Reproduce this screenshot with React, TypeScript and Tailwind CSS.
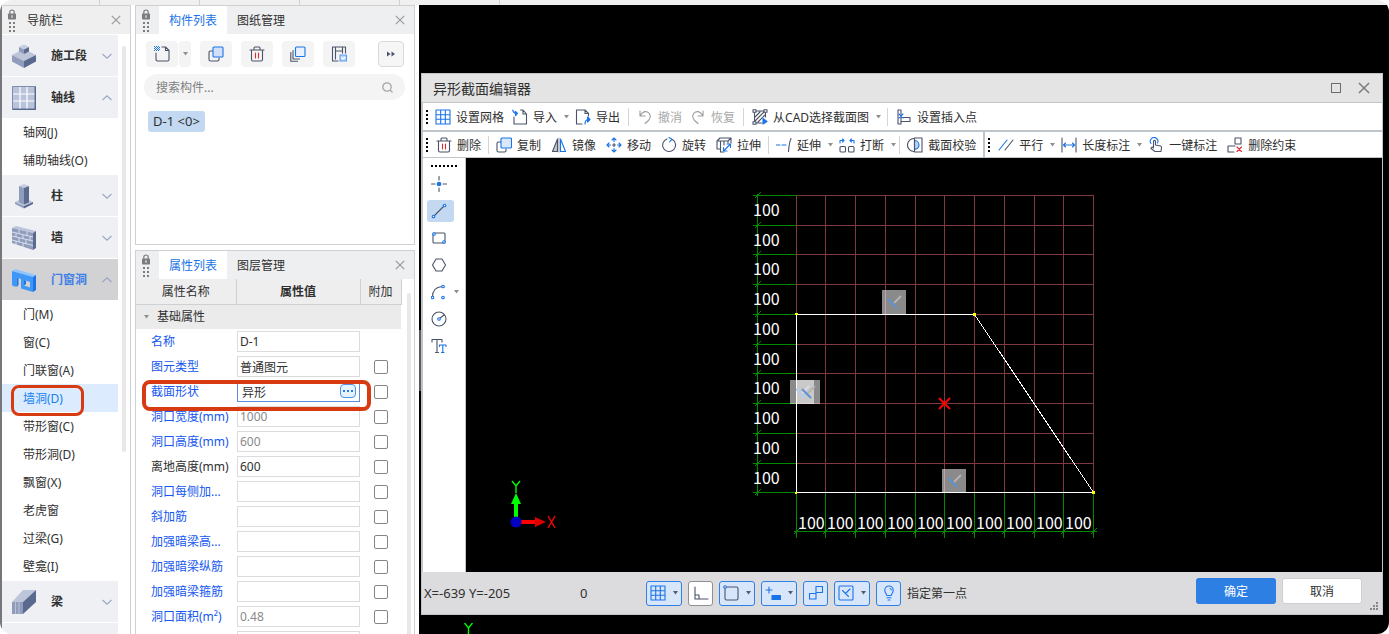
import type { ReactNode } from 'react';

interface NavGroup {
  label: string;
  icon: ReactNode;
  open?: boolean;
  active?: boolean;
  children?: string[];
}

interface PropertyRow {
  name: string;
  value: string;
  required?: boolean;
  readOnly?: boolean;
  editing?: boolean;
  noExtra?: boolean;
}

const INK = '#4b5369';
const BLUE = '#1a73e8';

/* ---------- small shared drawings ---------- */

const Icon = ({ children, size = 16 }: { children: ReactNode; size?: number }) => (
  <svg
    width={size}
    height={size}
    viewBox="0 0 16 16"
    fill="none"
    stroke={INK}
    strokeWidth="1.1"
    strokeLinecap="round"
    strokeLinejoin="round"
    className="shrink-0"
    aria-hidden="true"
  >
    {children}
  </svg>
);

const Caret = ({ color = '#8f8f8f' }: { color?: string }) => (
  <svg width="5" height="4" viewBox="0 0 5 4" className="shrink-0" aria-hidden="true">
    <path d="M0 0h5L2.5 3.5z" fill={color} />
  </svg>
);

const CloseIcon = ({ size = 10, color = '#9a9a9a' }: { size?: number; color?: string }) => (
  <svg width={size} height={size} viewBox="0 0 10 10" stroke={color} strokeWidth="1.2" aria-hidden="true">
    <path d="M.8.8l8.4 8.4M9.2.8L.8 9.2" />
  </svg>
);

const LockGrip = () => (
  <svg width="10" height="23" viewBox="0 0 10 23" fill="#7d7d80" aria-hidden="true">
    <path d="M2.8 5V3.2a2.2 2.2 0 014.4 0V5" fill="none" stroke="#7d7d80" strokeWidth="1.2" />
    <rect x="1" y="4.5" width="8" height="6" rx=".8" />
    <path d="M4.5 6.2h1v2.5h-1z" fill="#fff" />
    {[13, 17, 21].map((y) => (
      <g key={y}>
        <rect x="2" y={y} width="2" height="2" />
        <rect x="6" y={y} width="2" height="2" />
      </g>
    ))}
  </svg>
);

const Chevron = ({ up }: { up?: boolean }) => (
  <svg width="10" height="6" viewBox="0 0 10 6" fill="none" stroke="#9aa6c4" strokeWidth="1.1" aria-hidden="true">
    <path d={up ? 'M.5 5L5 .8 9.5 5' : 'M.5 1L5 5.2 9.5 1'} />
  </svg>
);

/* ---------- navigation icons ---------- */

const SegmentIcon = () => (
  <svg width="26" height="26" viewBox="0 0 26 26" aria-hidden="true">
    <path d="M1 12l12-6 12 6-12 6z" fill="#bcc5d9" />
    <path d="M1 12l12 6v7L1 18.500z" fill="#8f9cbc" />
    <path d="M25 12l-12 6v7l12-6.500z" fill="#5a6a8f" />
    <path d="M8 4l5-2.500L18 4l-5 2.500z" fill="#c5cde0" />
    <path d="M8 4l5 2.500V11L8 8.500z" fill="#8f9cbc" />
    <path d="M18 4l-5 2.500V11l5-2.500z" fill="#5a6a8f" />
  </svg>
);

const AxisIcon = () => (
  <svg width="26" height="26" viewBox="0 0 26 26" aria-hidden="true">
    <rect x="1" y="1" width="24" height="24" fill="#5a6a8f" />
    <rect x="1" y="1" width="22.500" height="22.500" fill="#b9c3d9" />
    <path d="M1.500 25V1.500H25" fill="none" stroke="#7e8cae" />
    <path d="M9 2v21.500M16 2v21.500M2 9h21.500M2 16h21.500" stroke="#fff" strokeWidth="1.200" />
  </svg>
);

const ColumnIcon = () => (
  <svg width="26" height="26" viewBox="0 0 26 26" aria-hidden="true">
    <path d="M4 19l9-4.500 9 4.500-9 4z" fill="#bcc5d9" />
    <path d="M4 19l9 4v2.500L4 21z" fill="#8f9cbc" />
    <path d="M22 19l-9 4v2.500l9-4.500z" fill="#5a6a8f" />
    <path d="M8 3l5-2 5 2-5 2z" fill="#c5cde0" />
    <path d="M8 3l5 2v16.500L8 19.500z" fill="#8f9cbc" />
    <path d="M18 3l-5 2v16.500l5-2z" fill="#5a6a8f" />
  </svg>
);

const WallIcon = () => (
  <svg width="26" height="26" viewBox="0 0 26 26" aria-hidden="true">
    <path d="M1 3l4-2 20 5-3 2z" fill="#bcc5d9" />
    <path d="M1 3l21 5v17L1 18z" fill="#8f9cbc" />
    <path d="M22 8l3-2v17l-3 2z" fill="#5a6a8f" />
    <path
      d="M1 7l21 5M1 11l21 5M1 15l21 5.500M8 4.500v4M16 6.500v4M5 8v4M12 10v4M19 11.500v4M8 13v4M15 14.500v4.500M5 16v4M12 18v4"
      stroke="#e2e7f2"
      strokeWidth=".9"
    />
  </svg>
);

const OpeningIcon = () => (
  <svg width="26" height="26" viewBox="0 0 26 26" aria-hidden="true">
    <path d="M1 4l3-2 21 6-3 2z" fill="#8ec5ff" />
    <path fillRule="evenodd" d="M1 4l21 6v15L10 21.500V12L5.500 10.500V20L1 18.500zM13 13v5.500l6 2V15z" fill="#3f97f7" />
    <path d="M22 10l3-2v15l-3 2z" fill="#1c74e6" />
    <path d="M5.500 10.500l2 .7V18l-2 2zM13 18.500l2-1.500V13.700l-2-.7z" fill="#1c74e6" />
  </svg>
);

const BeamIcon = () => (
  <svg width="26" height="26" viewBox="0 0 26 26" aria-hidden="true">
    <path d="M1 13L12 1h13L12 13z" fill="#bcc5d9" />
    <path d="M12 13L25 1v12L12 25z" fill="#5a6a8f" />
    <path d="M1 13h11v12H1z" fill="#8f9cbc" />
    <path d="M4.500 13v12M8 13v12" stroke="#c5cde0" strokeWidth=".8" />
  </svg>
);

const navGroups: NavGroup[] = [
  { label: '施工段', icon: <SegmentIcon /> },
  { label: '轴线', icon: <AxisIcon />, open: true, children: ['轴网(J)', '辅助轴线(O)'] },
  { label: '柱', icon: <ColumnIcon /> },
  { label: '墙', icon: <WallIcon /> },
  {
    label: '门窗洞',
    icon: <OpeningIcon />,
    open: true,
    active: true,
    children: [
      '门(M)', '窗(C)', '门联窗(A)', '墙洞(D)', '带形窗(C)',
      '带形洞(D)', '飘窗(X)', '老虎窗', '过梁(G)', '壁龛(I)',
    ],
  },
  { label: '梁', icon: <BeamIcon /> },
];

const properties: PropertyRow[] = [
  { name: '名称', value: 'D-1', noExtra: true },
  { name: '图元类型', value: '普通图元' },
  { name: '截面形状', value: '异形', editing: true },
  { name: '洞口宽度(mm)', value: '1000', readOnly: true },
  { name: '洞口高度(mm)', value: '600', readOnly: true },
  { name: '离地高度(mm)', value: '600', required: true },
  { name: '洞口每侧加...', value: '' },
  { name: '斜加筋', value: '' },
  { name: '加强暗梁高...', value: '' },
  { name: '加强暗梁纵筋', value: '' },
  { name: '加强暗梁箍筋', value: '' },
  { name: '洞口面积(m²)', value: '0.48', readOnly: true },
  { name: '', value: '' },
];

/* ---------- left navigation ---------- */

const NavPanel = () => (
  <nav className="w-[131px] shrink-0 border-l-2 border-r border-l-[#77777b] border-r-[#d0d0d2] bg-white overflow-hidden">
    <header className="h-[29px] flex items-center bg-[#efeff0] border-t border-[#d0d0d2] pl-[5px] pr-[9px]">
      <LockGrip />
      <span className="ml-2.5 pt-0.5 flex-1">导航栏</span>
      <button aria-label="关闭导航栏"><CloseIcon /></button>
    </header>
    <div className="relative">
      <div className="w-[116px]">
        {navGroups.map((g) => (
          <section key={g.label}>
            <button
              className={`w-full h-[42px] flex items-center border-t border-white pl-[9px] pr-1.5 font-bold ${
                g.active ? 'bg-[#d2d2d4] text-[#3f7fe8]' : 'bg-[#eff0f4]'
              }`}
            >
              {g.icon}
              <span className="ml-3.5 flex-1 text-left">{g.label}</span>
              <Chevron up={g.open} />
            </button>
            {g.children?.map((c) => (
              <a
                key={c}
                href="#"
                className={`relative flex items-center h-7 pt-0.5 pl-[21px] ${c === '墙洞(D)' ? 'bg-[#dcebfe] text-[#1482f0]' : ''}`}
              >
                {c}
                {c === '墙洞(D)' && (
                  <span className="absolute left-[9px] top-px w-[73px] h-[31px] border-[3px] border-[#d83a12] rounded-lg" />
                )}
              </a>
            ))}
          </section>
        ))}
        <div className="h-[42px] border-t border-white bg-[#eff0f4]" />
      </div>
      <div className="absolute right-1 top-3 w-1 h-[406px] rounded-full bg-[#e8e8e9]" />
    </div>
  </nav>
);

/* ---------- component list + property list ---------- */

const PanelTabs = ({ tabs }: { tabs: [string, string] }) => (
  <header className="h-7 flex items-stretch bg-[#eeeff1] pr-[9px]">
    <span className="w-[23px] flex items-center justify-center pr-1"><LockGrip /></span>
    <button className="px-2.5 pt-px bg-white text-[#1a73e8]">{tabs[0]}</button>
    <button className="px-2.5 pt-px">{tabs[1]}</button>
    <span className="flex-1" />
    <button aria-label="关闭面板"><CloseIcon /></button>
  </header>
);

const tile = 'w-8 h-[26px] flex items-center justify-center rounded-sm bg-[#f4f4f5]';

const ComponentList = () => (
  <section className="h-60 shrink-0 border border-[#d0d0d2] bg-white">
    <PanelTabs tabs={['构件列表', '图纸管理']} />
    <div className="flex mt-[7px] ml-2.5 mr-2.5">
      <button className={tile} aria-label="新建">
        <Icon>
          <path d="M2 7v6.500c0 1 .5 1.500 1.500 1.500h10c1 0 1.500-.5 1.500-1.500V4.500L11.500 1H8M11.500 1v3.500H15" />
          <path
            d="M0 .5h5M1 1.500h5M0 2.500h5M1 3.500h5M0 4.500h5"
            stroke={BLUE}
            strokeDasharray="1 1"
            strokeLinecap="butt"
          />
        </Icon>
      </button>
      <button className="w-3 ml-px h-[26px] flex items-center justify-center rounded-sm bg-[#f4f4f5]" aria-label="新建选项">
        <Caret />
      </button>
      <div className="flex gap-[9px] ml-[9px]">
        <button className={tile} aria-label="复制构件">
          <Icon>
            <path d="M4.500 5H2.500C1.500 5 1 5.500 1 6.500v7c0 1 .5 1.500 1.500 1.500h7c1 0 1.500-.5 1.500-1.500V12" />
            <rect x="5" y="1" width="10" height="10" rx="1" fill="#cfe0f8" stroke={BLUE} />
          </Icon>
        </button>
        <button className={tile} aria-label="删除构件"><TrashIcon /></button>
        <button className={tile} aria-label="层间复制">
          <Icon>
            <path d="M3 4.500v8.500h6.500M.8 6.500v8.700H7.500" />
            <rect x="5.500" y="1" width="9.500" height="9.500" rx="1" fill="#e8f1fd" stroke={BLUE} />
          </Icon>
        </button>
        <button className={tile} aria-label="存档">
          <Icon>
            <path d="M7 15H1.500V1h13v6M4.500 1v12M4.500 5h7V1M11.500 5v2" />
            <rect x="9" y="9" width="6.500" height="6" fill="#bcd6fb" stroke="#5b9cf5" />
            <path d="M10.500 11.500l1.500 1.500 2-1.500" stroke="#fff" />
          </Icon>
        </button>
      </div>
      <button
        className="ml-auto w-[26px] h-[26px] flex items-center justify-center rounded-sm border border-[#dadada] bg-[#f6f6f7]"
        aria-label="更多"
      >
        <svg width="8" height="6" viewBox="0 0 8 6" fill={INK} aria-hidden="true"><path d="M0 .5L3.500 3 0 5.500zM4.500.5L8 3 4.500 5.500z" /></svg>
      </button>
    </div>
    <label className="mt-[7px] ml-2 mr-[9px] h-[26px] rounded-full bg-[#f4f4f4] flex items-center px-3">
      <input
        aria-label="搜索构件"
        placeholder="搜索构件..."
        className="flex-1 min-w-0 pt-0.5 bg-transparent outline-none placeholder:text-[#808080]"
      />
      <svg width="11" height="11" viewBox="0 0 11 11" fill="none" stroke="#a6a6a6" strokeWidth="1.3" aria-hidden="true">
        <circle cx="5" cy="5" r="4.200" />
        <path d="M8 8l2.500 2.500" />
      </svg>
    </label>
    <button className="ml-3 mt-[11px] w-[57px] h-[21px] rounded-[3px] bg-[#c2d9f1] text-[13px]">D-1 &lt;0&gt;</button>
  </section>
);

const PropertyPanel = () => (
  <section className="relative flex-1 min-h-0 mt-[5px] border border-b-0 border-[#d0d0d2] bg-white">
    <PanelTabs tabs={['属性列表', '图层管理']} />
    <div className="overflow-hidden h-[calc(100%-28px)] relative">
      <table className="table-fixed w-[265px] border-collapse">
        <colgroup>
          <col className="w-[100px]" />
          <col className="w-[124px]" />
          <col className="w-[41px]" />
        </colgroup>
        <thead>
          <tr className="h-[25px] bg-[#eeeeef]">
            <th className="pt-px font-normal border-r border-b border-[#d0d0d2]">属性名称</th>
            <th className="pt-px font-bold border-r border-b border-[#d0d0d2]">属性值</th>
            <th className="pt-px font-normal border-r border-b border-[#d0d0d2]">附加</th>
          </tr>
        </thead>
        <tbody>
          <tr className="h-[25px] bg-[#ebebec]">
            <td colSpan={3} className="pl-2">
              <span className="flex items-center gap-2"><Caret />基础属性</span>
            </td>
          </tr>
          {properties.map((p, i) => (
            <tr key={i} className="h-[25px]">
              <td className={`pl-[15px] whitespace-nowrap ${p.required ? '' : 'text-[#1557f0]'}`}>
                <label htmlFor={`prop-${i}`}>{p.name}</label>
              </td>
              <td className="pl-px">
                <span className="relative block">
                  <input
                    id={`prop-${i}`}
                    defaultValue={p.value}
                    readOnly={p.readOnly}
                    className={`block w-[123px] h-[21px] border outline-none ${
                      p.editing ? 'border-[#5c8edb] px-1' : 'border-[#dcdcdc] px-0.5'
                    } ${p.readOnly ? 'text-[#8a8a8a]' : ''}`}
                  />
                  {p.editing && (
                    <button
                      aria-label="编辑截面"
                      className="absolute right-1 top-[3px] w-4 h-3.5 rounded-sm border border-[#4a94e6] bg-[#e6f2fe] flex items-center justify-center gap-0.5"
                    >
                      <i className="w-0.5 h-0.5 bg-[#2d7be0]" />
                      <i className="w-0.5 h-0.5 bg-[#2d7be0]" />
                      <i className="w-0.5 h-0.5 bg-[#2d7be0]" />
                    </button>
                  )}
                </span>
              </td>
              <td>
                {!p.noExtra && (
                  <input
                    type="checkbox"
                    aria-label={`附加 ${p.name}`}
                    className="block mx-auto appearance-none w-3.5 h-3.5 rounded-[2px] border border-[#858585] bg-white"
                  />
                )}
              </td>
            </tr>
          ))}
        </tbody>
      </table>
      <div className="absolute right-[3px] top-3.5 bottom-0 w-1 rounded-t-full bg-[#e8e8e9]" />
    </div>
    {/* highlight round the section shape row */}
    <div className="absolute left-1.5 top-[129px] w-[229px] h-[31px] border-4 border-[#d83a12] rounded-lg pointer-events-none" />
  </section>
);

/* ---------- section editor ---------- */

const TrashIcon = () => (
  <Icon>
    <path d="M1 4h14M5 4V2c0-.6.400-1 1-1h4c.6 0 1 .4 1 1v2M2.500 4v9.500c0 1 .5 1.500 1.500 1.500h8c1 0 1.500-.5 1.500-1.500V4" />
    <path d="M6.500 7v5M9.500 7v5" stroke="#dd2a35" />
  </Icon>
);

const GridIcon = () => (
  <Icon>
    <path d="M1 1h14v14H1zM5.700 1v14M10.300 1v14M1 5.700h14M1 10.300h14" stroke={BLUE} />
  </Icon>
);

const ImportIcon = () => (
  <Icon>
    <path d="M2 8v7h12.500V5L11 1H8.500M11 1v4h3.500" />
    <path d="M.8 1c.2 2.500 1.500 3.500 4 3.500M3.500 2.500l2 2-2 2.200z" stroke={BLUE} fill={BLUE} fillOpacity=".7" />
  </Icon>
);

const ExportIcon = () => (
  <Icon>
    <path d="M7 15H1.500V1H10l3.500 3.500V7M10 1v3.500h3.500" />
    <path d="M10 15c0-3 1-4.500 4-4.500" stroke={BLUE} />
    <path d="M12.500 8l2.500 2.500-2.500 2.500z" stroke={BLUE} fill={BLUE} />
  </Icon>
);

const UndoIcon = () => (
  <Icon>
    <path d="M3 2v5h5M3 7c2-3.500 5-5 7.500-4 3.500 1.500 3.500 6 1 8.500L8 14.500" stroke="#9b9b9b" />
  </Icon>
);

const RedoIcon = () => (
  <Icon>
    <path d="M13 2v5H8M13 7c-2-3.500-5-5-7.500-4C2 4.500 2 9 4.500 11.500L8 14.500" stroke="#9b9b9b" />
  </Icon>
);

const CadIcon = () => (
  <Icon>
    <path d="M3 2h10M2.500 3v10M13.500 3v5M3 14h7M3 8l5-5M3 12l9-9M6 13l7-7" />
    <path d="M1 .7h3v2.600H1zM12 .7h3v2.600h-3zM1 12.700h3v2.600H1z" fill="#fff" />
    <path d="M11 9.500v5.500l4-2.500z" fill={BLUE} stroke={BLUE} />
  </Icon>
);

const InsertPointIcon = () => (
  <Icon>
    <path d="M2 1h3v14H2zM5 8.500h9v4H5" />
    <path d="M3 5l4 4M7 5L3 9" stroke={BLUE} />
  </Icon>
);

const CopyIcon = () => (
  <Icon>
    <path d="M5 5H2.500C1.500 5 1 5.500 1 6.500v7c0 1 .5 1.500 1.500 1.500h6c1 0 1.500-.5 1.500-1.500V12" />
    <rect x="5" y="1" width="10.500" height="10" rx="1" fill="#dbe8fb" stroke={BLUE} />
  </Icon>
);

const MirrorIcon = () => (
  <Icon>
    <path d="M6.500 2v12.500H1.500z" fill="#c3c7d0" />
    <path d="M9.500 2v12.500h5z" stroke={BLUE} />
    <path d="M8 1v14" stroke="#9aa0ae" />
  </Icon>
);

const MoveIcon = () => (
  <Icon>
    <path d="M8 1v3.500M8 11.500V15M1 8h3.500M11.500 8H15M6 3l2-2 2 2M6 13l2 2 2-2M3 6L1 8l2 2M13 6l2 2-2 2" stroke={BLUE} />
    <path d="M8 6.500v3M6.500 8h3" />
  </Icon>
);

const RotateIcon = () => (
  <Icon>
    <path d="M11.500 2.500a6.500 6.500 0 11-5.500-.6" />
    <path d="M8 .5l3 1.800L8.500 5" stroke={BLUE} />
  </Icon>
);

const StretchIcon = () => (
  <Icon>
    <path d="M1 4l3-3h11l-3 3H1v8h3M4.500 4v11H8M8 4v4M15 1v5M12 4v2" />
    <path d="M8 13.500l6-6M11 7h3.500v3.500M7.500 10.500V14H11" stroke={BLUE} />
  </Icon>
);

const ExtendIcon = () => (
  <Icon>
    <path d="M0 8h4M6 8h4" stroke={BLUE} />
    <path d="M15 1.500c-1.500 3-2 7-2.500 13" />
  </Icon>
);

const BreakIcon = () => (
  <Icon>
    <rect x="1" y="9.500" width="5.500" height="5.500" rx="1" />
    <rect x="9.500" y="9.500" width="5.500" height="5.500" rx="1" />
    <path d="M1 6V3.500h4M3.500 2L5 3.500 3.500 5M15 6V3.500h-4M12.500 2L11 3.500 12.500 5" stroke={BLUE} />
  </Icon>
);

const CheckSectionIcon = () => (
  <Icon>
    <path d="M7 1.500a6.500 6.500 0 000 13" />
    <path d="M7.500 3.500a4.500 4.500 0 010 9z" fill="#b9d4fa" stroke={BLUE} />
    <path d="M7.500 1H15v14H7.500z" />
  </Icon>
);

const ParallelIcon = () => (
  <Icon>
    <path d="M1 13L9 3" stroke={BLUE} />
    <path d="M7 13l8-10" />
  </Icon>
);

const LengthIcon = () => (
  <Icon>
    <path d="M1 1v14M15 1v14" />
    <path d="M2.500 8h11M4.500 6l-2 2 2 2M11.500 6l2 2-2 2" stroke={BLUE} />
  </Icon>
);

const TapIcon = () => (
  <Icon>
    <path d="M3 6.500A3.800 3.800 0 119.500 6" stroke={BLUE} />
    <path d="M5.500 10V4.500c0-1.500 2-1.500 2 0V8l5 1c1 .3 1.200 1 1 2l-.5 3.500h-6L3 11.500c0-1.500 1.500-1.800 2.500-.5" />
  </Icon>
);

const RemoveConstraintIcon = () => (
  <Icon>
    <path d="M8 1h6v6H8zM8 9H1v6h6" />
    <path d="M10 10l4.500 4.500M14.500 10L10 14.500" stroke="#dd2a35" />
  </Icon>
);

const ToolHandle = () => (
  <span className="flex flex-col gap-0.5 px-[3px]" aria-hidden="true">
    {[0, 1, 2, 3].map((n) => <i key={n} className="w-0.5 h-0.5 bg-black" />)}
  </span>
);

const Tool = ({ icon, label, tight, disabled }: { icon: ReactNode; label: string; tight?: boolean; disabled?: boolean }) => (
  <button
    disabled={disabled}
    className={`flex items-center gap-[5px] whitespace-nowrap ${tight ? 'px-1' : 'px-[5px]'} ${disabled ? 'text-[#a8a8a8]' : ''}`}
  >
    {icon}
    <span className="pt-0.5">{label}</span>
  </button>
);

const ToolMenu = ({ label, wide }: { label: string; wide?: boolean }) => (
  <button aria-label={label} className={`h-5 flex items-center justify-center ${wide ? 'w-2.5' : 'w-2'}`}><Caret /></button>
);

const Divider = ({ wide }: { wide?: boolean }) => (
  <span className={`flex justify-center ${wide ? 'w-[9px]' : 'w-[5px]'}`}><i className="w-px h-[18px] bg-[#d5d5d8]" /></span>
);

const Toolbars = () => (
  <div className="bg-white">
    <div className="h-[27px] flex items-center">
      <ToolHandle />
      <Tool tight icon={<GridIcon />} label="设置网格" />
      <Tool tight icon={<ImportIcon />} label="导入" />
      <ToolMenu wide label="导入选项" />
      <Tool tight icon={<ExportIcon />} label="导出" />
      <Divider wide />
      <Tool tight disabled icon={<UndoIcon />} label="撤消" />
      <Tool tight disabled icon={<RedoIcon />} label="恢复" />
      <Divider wide />
      <Tool tight icon={<CadIcon />} label="从CAD选择截面图" />
      <ToolMenu wide label="选择截面图选项" />
      <Divider wide />
      <Tool tight icon={<InsertPointIcon />} label="设置插入点" />
    </div>
    <div className="h-7 flex items-center border-t-2 border-b border-[#c0c5ca]">
      <ToolHandle />
      <Tool icon={<TrashIcon />} label="删除" />
      <Divider />
      <Tool icon={<CopyIcon />} label="复制" />
      <Tool icon={<MirrorIcon />} label="镜像" />
      <Tool icon={<MoveIcon />} label="移动" />
      <Tool icon={<RotateIcon />} label="旋转" />
      <Tool icon={<StretchIcon />} label="拉伸" />
      <Divider />
      <Tool icon={<ExtendIcon />} label="延伸" />
      <ToolMenu label="延伸选项" />
      <Tool icon={<BreakIcon />} label="打断" />
      <ToolMenu label="打断选项" />
      <Divider />
      <Tool icon={<CheckSectionIcon />} label="截面校验" />
      <i className="w-0.5 self-stretch bg-[#c0c5ca] ml-0.5" />
      <ToolHandle />
      <Tool icon={<ParallelIcon />} label="平行" />
      <ToolMenu label="平行选项" />
      <Tool icon={<LengthIcon />} label="长度标注" />
      <ToolMenu label="长度标注选项" />
      <Tool icon={<TapIcon />} label="一键标注" />
      <Tool icon={<RemoveConstraintIcon />} label="删除约束" />
    </div>
  </div>
);

const Node = ({ x, y }: { x: number; y: number }) => (
  <circle cx={x} cy={y} r="1.300" stroke={BLUE} fill="#fff" />
);

const drawTools: { label: string; icon: ReactNode; active?: boolean; menu?: boolean }[] = [
  {
    label: '点',
    icon: (
      <Icon>
        <path d="M8 .5v3.500M8 12v3.500M.5 8H4M12 8h3.500" />
        <circle cx="8" cy="8" r="1.800" fill={BLUE} stroke={BLUE} />
      </Icon>
    ),
  },
  { label: '直线', active: true, icon: <Icon><path d="M3 13L13.500 2.500" /><Node x={2.5} y={13.5} /><Node x={13.5} y={2.5} /></Icon> },
  {
    label: '矩形',
    icon: <Icon><rect x="2" y="3" width="12" height="10" rx="1" /><Node x={3} y={4} /><Node x={13} y={12} /></Icon>,
  },
  { label: '多边形', icon: <Icon><path d="M5 2h6l3.500 6L11 14H5L1.500 8z" /></Icon> },
  {
    label: '圆弧',
    menu: true,
    icon: <Icon><path d="M1.500 13C1.500 7 5 3 11 2.500" /><Node x={1.5} y={13.5} /><Node x={12} y={2.5} /><Node x={12} y={13.5} /></Icon>,
  },
  { label: '圆', icon: <Icon><circle cx="8" cy="8" r="7" /><path d="M8 8l5-4" /><Node x={8} y={8} /></Icon> },
  {
    label: '文字',
    icon: (
      <Icon>
        <path d="M1 4V1.500h10V4M6 1.500v13M4.500 14.500h3" />
        <path d="M8.500 8.500V7H15v1.500M11.800 7v7.500M10.500 14.500H13" stroke={BLUE} />
      </Icon>
    ),
  },
];

const DrawSidebar = () => (
  <aside className="w-[43px] shrink-0 bg-white border-r border-[#c0c5ca] pt-[7px] pl-1">
    <div className="flex gap-0.5 ml-1 mb-1.5" aria-hidden="true">
      {[0, 1, 2, 3, 4, 5, 6].map((n) => <i key={n} className="w-0.5 h-0.5 bg-black" />)}
    </div>
    <div className="flex flex-col gap-[5px]">
      {drawTools.map((t) => (
        <div key={t.label} className="flex items-center">
          <button
            aria-label={t.label}
            className={`w-[27px] h-[22px] flex items-center pl-1 rounded-[3px] ${t.active ? 'bg-[#c2d9f1]' : ''}`}
          >
            {t.icon}
          </button>
          {t.menu && <button aria-label="圆弧选项" className="h-4"><Caret /></button>}
        </div>
      ))}
    </div>
  </aside>
);

// grid lines on the canvas, measured from its top left corner
const columns = [330, 359, 389, 419, 449, 478, 508, 538, 568, 597, 627];
const rows = [37, 67, 96, 126, 156, 186, 215, 245, 275, 305, 334];

const ConstraintMark = ({ x, y }: { x: number; y: number }) => (
  <g>
    <rect x={x} y={y} width="24" height="24" fill="#fff" fillOpacity=".54" />
    <path d={`M${x + 12} ${y + 13}l7 -7`} stroke="#b4b4b4" strokeWidth="2" />
    <path d={`M${x + 6} ${y + 9}l9 9`} stroke="#5b93d6" strokeWidth="2" />
  </g>
);

const Canvas = () => (
  <div className="flex-1 min-w-0 bg-black overflow-hidden">
    <svg width="100%" height="100%" className="block font-['Noto_Sans_CJK_SC',sans-serif]" role="img" aria-label="截面轮廓">
      <g transform="translate(.5 .5)" fill="none" shapeRendering="crispEdges">
        {rows.map((y) => (
          <g key={y}>
            <path d={`M330 ${y}h297`} stroke="#7f3a3f" />
            <path d={`M286 ${y}h44M288 ${y + 3}l6 -6`} stroke="#008a00" />
          </g>
        ))}
        {columns.map((x) => (
          <g key={x}>
            <path d={`M${x} 37v297`} stroke="#7f3a3f" />
            <path d={`M${x} 334v45M${x - 3} 376l6 -6`} stroke="#008a00" />
          </g>
        ))}
        <path d="M291 35v302M327 373h303" stroke="#008a00" />
        <path d="M330 156h178l119 178H330z" stroke="#fff" />
      </g>
      <g fill="#ff0">
        <rect x="329" y="155" width="3" height="2" />
        <rect x="507" y="155" width="3" height="3" />
        <rect x="626" y="333" width="3" height="3" />
        <rect x="329" y="334" width="2" height="2" />
      </g>
      <g fill="#fff" fontSize="16">
        {rows.slice(0, 10).map((y) => <text key={y} x="287" y={y + 21}>100</text>)}
        {columns.slice(0, 10).map((x) => <text key={x} x={x + 2} y="371">100</text>)}
      </g>
      <ConstraintMark x={416} y={132} />
      <ConstraintMark x={324} y={222} />
      <ConstraintMark x={330} y={222} />
      <ConstraintMark x={476} y={311} />
      <path d="M473 240l11 11M484 240l-11 11" stroke="#f00" strokeWidth="2" />
      <path d="M50 362V345" stroke="#0f0" strokeWidth="4" />
      <path d="M45 346l5-11 5 11z" fill="#0f0" />
      <path d="M50 364h20" stroke="#f00" strokeWidth="4" />
      <path d="M69 359l11 5-11 5z" fill="#d00" />
      <circle cx="50" cy="364" r="5.500" fill="#0000c0" />
      <path d="M46 323l4 5 4-5M50 328v7" stroke="#0f0" strokeWidth="1.400" fill="none" />
      <path d="M82 358l7 12M89 358l-7 12" stroke="#f00" strokeWidth="1.400" fill="none" />
    </svg>
  </div>
);

const Toggle = ({ label, menu, off, children }: { label: string; menu?: boolean; off?: boolean; children: ReactNode }) => (
  <button
    aria-label={label}
    className={`h-[25px] flex items-center rounded-[3px] border px-[3px] ${
      off ? 'bg-white border-[#909090]' : 'bg-[#d8e6fb] border-[#2f80e4]'
    } ${menu ? 'w-9 justify-between' : 'w-[25px] justify-center'}`}
  >
    {children}
    {menu && <Caret color="#565b68" />}
  </button>
);

const StatusBar = () => (
  <footer className="h-[42px] shrink-0 flex items-center bg-[#dcdcde] pl-0.5">
    <output className="w-[156px] pt-0.5 text-[13px]">X=-639 Y=-205</output>
    <output className="w-[66px] pt-0.5 text-[13px]">0</output>
    <div className="flex gap-1.5">
      <Toggle label="栅格" menu><GridIcon /></Toggle>
      <Toggle label="正交" off>
        <Icon><path d="M2 2v12h13M2 10h4v4" /></Icon>
      </Toggle>
      <Toggle label="对象捕捉" menu>
        <Icon><rect x="2" y="2" width="13" height="13" rx="1.500" /><Node x={2} y={2} /></Icon>
      </Toggle>
      <Toggle label="动态输入" menu>
        <Icon>
          <path d="M1 5h6M4 2v6" stroke={BLUE} />
          <rect x="7" y="10.500" width="8.500" height="4" fill={BLUE} stroke={BLUE} />
        </Icon>
      </Toggle>
      <Toggle label="约束">
        <Icon><path d="M8 1.500h6.500v6H8zM8 7.500v6.500H1.500V8.500H8" stroke={BLUE} /></Icon>
      </Toggle>
      <Toggle label="自动约束" menu>
        <Icon>
          <rect x="1" y="1" width="14" height="14" rx="1" stroke={BLUE} />
          <path d="M4.500 5.500l6 6M7.500 8.500L12 4" stroke={BLUE} />
        </Icon>
      </Toggle>
      <Toggle label="提示">
        <Icon>
          <path d="M5.800 10.500C5.500 8.500 3.800 8 3.800 5.200a4.200 4.200 0 018.400 0c0 2.800-1.700 3.300-2 5.300zM6 12.700h4M7 15h2M9 3.500c.8.200 1.200.8 1.300 1.500" stroke={BLUE} />
        </Icon>
      </Toggle>
    </div>
    <span className="ml-1.5 pt-0.5">指定第一点</span>
    <div className="ml-auto mb-1 flex gap-1.5">
      <button className="w-20 h-[26px] pt-0.5 rounded-[3px] bg-[#2d7fe3] text-white">确定</button>
      <button className="w-20 h-[26px] pt-0.5 rounded-[3px] bg-white border border-[#cfcfd1]">取消</button>
    </div>
    <svg width="9" height="8" viewBox="0 0 9 8" fill="#85858a" className="self-end ml-2 mr-[3px] mb-1" aria-hidden="true">
      <path d="M6 0h2v2H6zM3 3h2v2H3zM6 3h2v2H6zM0 6h2v2H0zM3 6h2v2H3zM6 6h2v2H6z" />
    </svg>
  </footer>
);

const SectionEditor = () => (
  <section className="flex-1 min-h-0 flex flex-col border border-[#c0c5ca] bg-[#dcdcde]">
    <header className="h-[29px] shrink-0 flex items-center bg-[#e4e4e4] border-b border-[#c0c5ca] pl-[11px] pr-3">
      <h1 className="flex-1 pt-0.5 text-sm">异形截面编辑器</h1>
      <button aria-label="最大化" className="w-2.5 h-2.5 border border-[#6d6d6d] mr-[17px]" />
      <button aria-label="关闭编辑器"><CloseIcon size={12} color="#7a7a7a" /></button>
    </header>
    <div className="flex-1 min-h-0 flex flex-col border-l border-[#c0c5ca]">
      <Toolbars />
      <div className="flex-1 min-h-0 flex">
        <DrawSidebar />
        <Canvas />
      </div>
    </div>
    <StatusBar />
  </section>
);

export default function App() {
  return (
    <div className="h-screen flex flex-col overflow-hidden rounded-xl bg-white font-['Noto_Sans','Noto_Sans_CJK_SC',sans-serif] text-xs text-[#303030]">
      <div className="h-[5px] shrink-0 flex bg-[#f0f0f1]" aria-hidden="true">
        {[0, 1, 2, 3, 4].map((n) => <i key={n} className="w-[100px] border-r border-[#d0d0d2]" />)}
      </div>
      <div className="flex-1 min-h-0 flex">
        <NavPanel />
        <div className="w-[280px] shrink-0 ml-1 mr-1 flex flex-col">
          <ComponentList />
          <PropertyPanel />
        </div>
        <main className="relative flex-1 min-w-0 flex flex-col bg-black pt-[68px] pl-0.5 pr-1.5 pb-[19px]">
          <SectionEditor />
          <svg width="9" height="11" viewBox="0 0 9 11" className="absolute left-[45px] bottom-0" fill="none" stroke="#0f0" strokeWidth="1.400" aria-hidden="true">
            <path d="M.5 0l4 5 4-5M4.500 5v6" />
          </svg>
          {/* splitter grip between the docked panels and the view */}
          <i className="absolute left-0 top-[325px] w-0.5 h-[61px] bg-[#5a5a5c]" aria-hidden="true" />
        </main>
      </div>
    </div>
  );
}
